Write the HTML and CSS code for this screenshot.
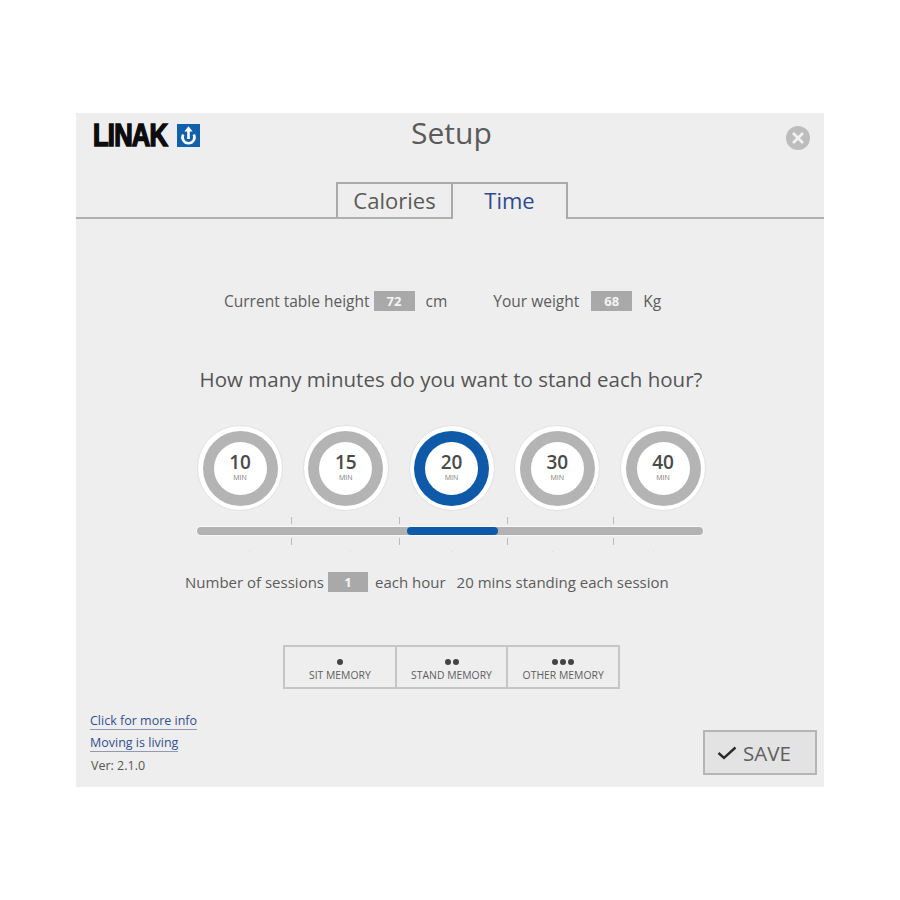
FILE: index.html
```html
<!DOCTYPE html>
<html lang="en">
<head>
    <meta charset="UTF-8">
    <meta name="viewport" content="width=device-width, initial-scale=1.0">
    <title>LINAK Setup</title>
    <link rel="stylesheet" href="styles.css">
</head>
<body>
    <div class="panel">
        <div class="header">
            <div class="logo">
                <span class="logo-text">LINAK</span>
                <svg class="logo-icon" width="23" height="23" viewBox="0 0 23 23">
                    <rect width="23" height="23" fill="#1160ab"/>
                    <path d="M6.2 10.5a6 6 0 1 0 10.6 0" fill="none" stroke="#fff" stroke-width="2.6"/>
                    <path d="M11.5 15V6" fill="none" stroke="#fff" stroke-width="2.6"/>
                    <path d="M11.5 2.2 15.6 7.4H7.4Z" fill="#fff"/>
                </svg>
            </div>
            <h1 class="title">Setup</h1>
            <svg class="close" width="24" height="24" viewBox="0 0 24 24">
                <circle cx="12" cy="12" r="12" fill="#bdbdbd"/>
                <path d="M7 7 17 17M17 7 7 17" stroke="#f2f2f2" stroke-width="2.6"/>
            </svg>
        </div>

        <div class="tabs">
            <div class="tab tab-calories">Calories</div>
            <div class="tab tab-time">Time</div>
        </div>

        <div class="info-row">
            <span>Current table height</span>
            <span class="value">72</span>
            <span class="unit">cm</span>
            <span class="weight-label">Your weight</span>
            <span class="value">68</span>
            <span class="unit">Kg</span>
        </div>

        <h2 class="question">How many minutes do you want to stand each hour?</h2>

        <div class="dials">
            <div class="dial"><div class="ring"><div class="face"><b>10</b><small>MIN</small></div></div></div>
            <div class="dial"><div class="ring"><div class="face"><b>15</b><small>MIN</small></div></div></div>
            <div class="dial"><div class="ring active"><div class="face"><b>20</b><small>MIN</small></div></div></div>
            <div class="dial"><div class="ring"><div class="face"><b>30</b><small>MIN</small></div></div></div>
            <div class="dial"><div class="ring"><div class="face"><b>40</b><small>MIN</small></div></div></div>
        </div>

        <div class="slider">
            <div class="ticks"><i></i><i></i><i></i><i></i></div>
            <div class="track"><div class="thumb"></div></div>
            <div class="ticks"><i></i><i></i><i></i><i></i></div>
            <div class="specks"><i></i><i></i><i></i><i></i><i></i></div>
        </div>

        <div class="sessions-row">
            <span>Number of sessions</span>
            <span class="value value-sessions">1</span>
            <span class="each-hour">each hour</span>
            <span class="sessions-note">20 mins standing each session</span>
        </div>

        <div class="memory">
            <div class="memory-btn"><span class="dots"><i></i></span>SIT MEMORY</div>
            <div class="memory-btn"><span class="dots"><i></i><i></i></span>STAND MEMORY</div>
            <div class="memory-btn"><span class="dots"><i></i><i></i><i></i></span>OTHER MEMORY</div>
        </div>

        <div class="footer">
            <div class="footer-links">
                <a href="#">Click for more info</a>
                <a href="#">Moving is living</a>
                <span class="version">Ver: 2.1.0</span>
            </div>
            <div class="save">
                <svg width="20" height="14" viewBox="0 0 20 14">
                    <path d="M1.5 7 7 12 18.5 1.5" fill="none" stroke="#2b2b2b" stroke-width="2.4"/>
                </svg>
                SAVE
            </div>
        </div>
    </div>
</body>
</html>
```

FILE: styles.css
```css
body {
    margin: 0;
    padding: 113px 0 0 76px;
    background-color: #fff;
    font-family: "Open Sans", "Noto Sans", sans-serif;
    color: #555;
}
.panel {
    width: 748px;
    height: 674px;
    background-color: #eee;
    display: flex;
    flex-direction: column;
}
.header {
    height: 69px;
    display: flex;
    align-items: flex-start;
    padding: 0 14px 0 17px;
}
.logo {
    width: 107px;
    height: 45px;
    display: flex;
    align-items: center;
    gap: 8px;
}
.logo-text {
    width: 76px;
    font-family: "Liberation Sans", sans-serif;
    font-weight: bold;
    font-size: 32px;
    letter-spacing: -1px;
    color: #0c0c0c;
    -webkit-text-stroke: 1.6px #0c0c0c;
    transform: scaleX(0.8);
    transform-origin: left center;
    white-space: nowrap;
}
.title {
    margin: 0 0 0 211px;
    font-size: 30px;
    font-weight: 400;
    line-height: 40px;
    color: #5a5a5a;
}
.close {
    margin: 13px 0 0 auto;
}
.tabs {
    display: flex;
    height: 35px;
    padding-left: 260px;
    border-bottom: 2px solid #b0b0b0;
}
.tab {
    height: 35px;
    box-sizing: border-box;
    border-top: 2px solid #aaa;
    font-size: 22px;
    line-height: 33px;
    text-align: center;
}
.tab-calories {
    width: 115px;
    border-left: 2px solid #aaa;
    color: #5a5a5a;
}
.tab-time {
    width: 117px;
    height: 37px;
    border-left: 2px solid #aaa;
    border-right: 2px solid #aaa;
    background-color: #eee;
    color: #2f4b8c;
}
.info-row {
    margin-top: 72px;
    height: 20px;
    display: flex;
    align-items: center;
    padding-left: 148px;
    font-size: 15.5px;
    color: #5c5c5c;
}
.value {
    width: 41px;
    height: 20px;
    margin-left: 4px;
    background-color: #a9a9a9;
    color: #f4f4f4;
    font-weight: 700;
    font-size: 13px;
    line-height: 20px;
    text-align: center;
}
.unit {
    margin-left: 11px;
}
.weight-label {
    margin-left: 46px;
    margin-right: 8px;
}
.question {
    margin: 53px 0 0;
    padding-left: 2px;
    height: 30px;
    font-size: 20.5px;
    font-weight: 400;
    line-height: 30px;
    text-align: center;
    color: #555;
}
.dials {
    margin-top: 31px;
    padding-left: 121px;
    display: flex;
    gap: 19.75px;
}
.dial {
    width: 86px;
    height: 86px;
    box-sizing: border-box;
    border-radius: 50%;
    background-color: #fff;
    border: 1px solid #e2e2e2;
    display: flex;
    align-items: center;
    justify-content: center;
}
.ring {
    width: 75px;
    height: 75px;
    border-radius: 50%;
    background-color: #b4b4b4;
    display: flex;
    align-items: center;
    justify-content: center;
}
.ring.active {
    background-color: #0f5aa8;
}
.face {
    width: 53px;
    height: 53px;
    border-radius: 50%;
    background-color: #fff;
    display: flex;
    flex-direction: column;
    align-items: center;
    justify-content: center;
}
.face b {
    font-size: 19px;
    line-height: 18px;
    font-weight: 600;
    color: #4a4a4a;
}
.face small {
    margin-top: 2px;
    font-size: 7px;
    line-height: 10px;
    color: #777;
}
.slider {
    margin-top: 6px;
    margin-left: 121px;
    width: 506px;
}
.ticks {
    height: 7px;
    display: flex;
    gap: 107px;
    padding-left: 94px;
}
.ticks i {
    width: 1px;
    background-color: #bbb;
}
.ticks i:last-child {
    margin-left: -2px;
}
.track {
    height: 8px;
    margin: 3px 0;
    border-radius: 4px;
    background-color: #b2b2b2;
    box-shadow: 0 0 0 1px #f8f8f8;
    padding-left: 210px;
}
.thumb {
    width: 91px;
    height: 8px;
    border-radius: 4px;
    background-color: #0f5aa8;
}
.specks {
    height: 1px;
    margin-top: 6px;
    display: flex;
    gap: 100px;
    padding-left: 52px;
}
.specks i {
    width: 1px;
    height: 1px;
    background-color: #ddd;
}
.sessions-row {
    margin-top: 20px;
    height: 20px;
    display: flex;
    align-items: center;
    padding-left: 109px;
    font-size: 15px;
    color: #5c5c5c;
}
.value-sessions {
    width: 40px;
}
.each-hour {
    margin-left: 7px;
}
.sessions-note {
    margin-left: 11px;
}
.memory {
    margin-top: 53px;
    margin-left: 207px;
    width: 337px;
    height: 44px;
    display: flex;
    box-sizing: border-box;
    border: 2px solid #c6c6c6;
}
.memory-btn {
    flex: 1;
    display: flex;
    flex-direction: column;
    align-items: center;
    font-size: 10.4px;
    line-height: 13px;
    color: #5f5f5f;
    padding-top: 12px;
}
.memory-btn + .memory-btn {
    border-left: 2px solid #c6c6c6;
}
.dots {
    height: 6px;
    margin-bottom: 4px;
    display: flex;
    gap: 2px;
}
.dots i {
    width: 6px;
    height: 6px;
    border-radius: 50%;
    background-color: #444;
}
.footer {
    flex: 1;
    display: flex;
    justify-content: space-between;
    align-items: flex-end;
    padding: 0 7px 12px 14px;
}
.footer-links {
    display: flex;
    flex-direction: column;
    align-items: flex-start;
    font-size: 12.5px;
    margin-bottom: -1px;
}
.footer-links a {
    color: #34508f;
    text-decoration: none;
    line-height: 17px;
    border-bottom: 1px solid #8e9bb8;
    margin-bottom: 4px;
}
.version {
    margin-left: 1px;
    color: #555;
    line-height: 20px;
}
.save {
    width: 114px;
    height: 45px;
    box-sizing: border-box;
    border: 2px solid #b5b5b5;
    background-color: #e3e3e3;
    display: flex;
    align-items: center;
    gap: 6px;
    padding: 0 0 0 12px;
    font-size: 20.5px;
    color: #5f5f5f;
}
```
